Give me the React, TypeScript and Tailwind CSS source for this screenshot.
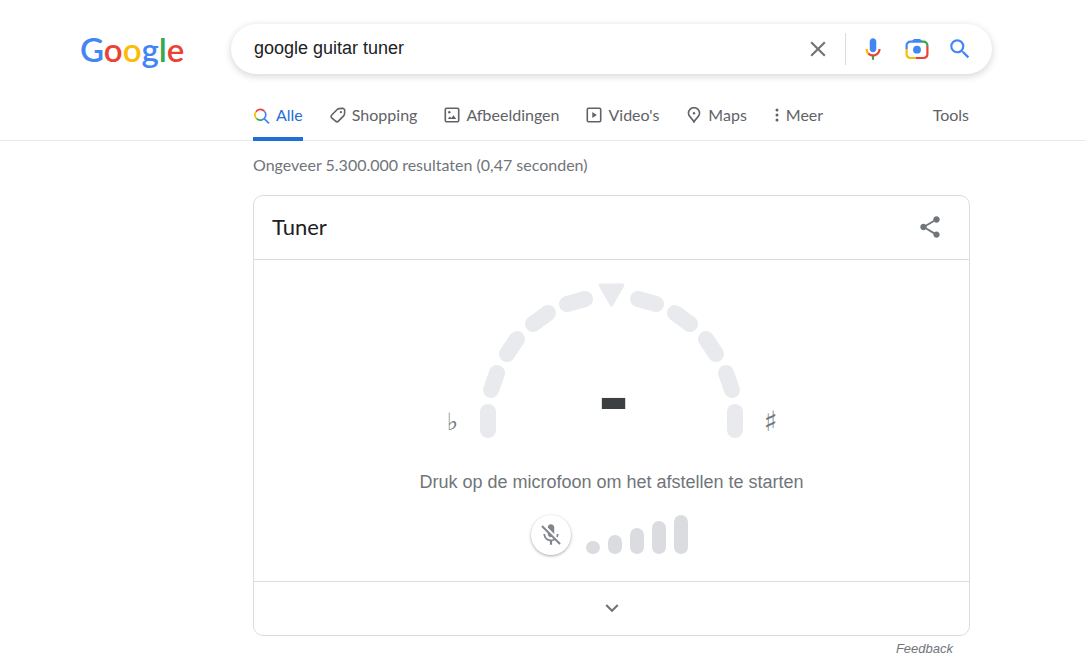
import { useState } from "react";

const segments = [
  [488, 412, 488, 430],
  [491, 390, 497, 373],
  [507, 354, 517, 339],
  [533, 324, 548, 313],
  [567, 304, 585, 299],
  [656, 304, 638, 299],
  [690, 324, 675, 313],
  [716, 354, 706, 339],
  [732, 390, 726, 373],
  [735, 412, 735, 430],
];

const tabs = [
  { label: "Alle", icon: AllIcon, active: true },
  { label: "Shopping", icon: TagIcon },
  { label: "Afbeeldingen", icon: ImageIcon },
  { label: "Video's", icon: VideoIcon },
  { label: "Maps", icon: PinIcon },
];

export default function App() {
  const [query, setQuery] = useState("google guitar tuner");

  return (
    <div className="min-h-screen bg-white font-['Liberation_Sans',Arial,sans-serif] text-[#202124]">
      <header className="flex items-center pt-6 pl-20">
        <a href="#" aria-label="Google" className="w-[151px] shrink-0 font-[Lato,sans-serif] text-[33px] leading-[50px] font-semibold">
          <span className="text-[#4285f4]">G</span>
          <span className="text-[#ea4335]">o</span>
          <span className="text-[#fbbc05]">o</span>
          <span className="text-[#4285f4]">g</span>
          <span className="text-[#34a853]">l</span>
          <span className="text-[#ea4335]">e</span>
        </a>
        <form
          onSubmit={(e) => e.preventDefault()}
          className="mr-6 flex h-[50px] w-full max-w-[761px] items-center rounded-full pr-[19px] pl-[23px] shadow-[0_2px_6px_1px_rgba(64,60,67,0.18)]"
        >
          <input
            aria-label="Zoeken"
            value={query}
            onChange={(e) => setQuery(e.target.value)}
            className="min-w-0 flex-1 pb-0.5 text-lg leading-6 outline-none"
          />
          <button type="button" aria-label="Wissen" onClick={() => setQuery("")} className="mr-[14px] text-[#70757a]">
            <svg className="size-[26px]" viewBox="0 0 24 24" fill="currentColor">
              <path d="M19 6.41L17.59 5 12 10.59 6.41 5 5 6.41 10.59 12 5 17.59 6.41 19 12 13.41 17.59 19 19 17.59 13.41 12z" />
            </svg>
          </button>
          <span className="h-8 w-px bg-[#dadce0]" />
          <button type="button" aria-label="Zoeken met je stem" className="ml-[14px]">
            <MicIcon />
          </button>
          <button type="button" aria-label="Zoeken met afbeelding" className="ml-[18px]">
            <LensIcon />
          </button>
          <button aria-label="Zoeken" className="ml-[17px] text-[#4285f4]">
            <svg className="size-[26px]" viewBox="0 0 24 24" fill="currentColor">
              <path d="M15.5 14h-.79l-.28-.27A6.471 6.471 0 0 0 16 9.5 6.5 6.5 0 1 0 9.5 16c1.61 0 3.09-.59 4.23-1.57l.27.28v.79l5 4.99L20.49 19l-4.99-5zm-6 0C7.01 14 5 11.99 5 9.5S7.01 5 9.5 5 14 7.01 14 9.5 11.99 14 9.5 14z" />
            </svg>
          </button>
        </form>
      </header>

      <nav className="border-b border-[#e8eaed] pl-[253px] font-[Lato,sans-serif] text-base text-[#5f6368]">
        <div className="flex h-[66px] max-w-[716px] items-stretch gap-[27px]">
          {tabs.map(({ label, icon: Icon, active }) => (
            <a
              key={label}
              href="#"
              className={
                active
                  ? "-mb-px flex items-center gap-[6px] border-b-4 border-[#1f6fd6] pt-[21px] pb-0.5 text-[#1f6fd6]"
                  : "flex items-center gap-[6px] pt-[21px] pb-[5px]"
              }
            >
              <Icon />
              {label}
            </a>
          ))}
          <button className="flex items-center gap-1 pt-[21px] pb-[5px]">
            <svg className="h-4 w-2" viewBox="0 0 8 16" fill="currentColor">
              <circle cx="3" cy="3" r="1.5" />
              <circle cx="3" cy="8" r="1.5" />
              <circle cx="3" cy="13" r="1.5" />
            </svg>
            Meer
          </button>
          <button className="ml-auto pt-[21px] pb-[5px]">Tools</button>
        </div>
      </nav>

      <main className="mr-6 ml-[253px] max-w-[717px]">
        <p className="pt-3 pb-[18px] font-[Lato,sans-serif] text-base leading-6 text-[#70757a]">
          Ongeveer 5.300.000 resultaten (0,47 seconden)
        </p>
        <section className="rounded-[10px] border border-[#dadce0]">
          <div className="flex h-16 items-center justify-between border-b border-[#dadce0] pr-[26px] pb-0.5 pl-[18px]">
            <h2 className="font-[Lato,sans-serif] text-[22px] leading-7">Tuner</h2>
            <button aria-label="Delen" className="text-[#70757a]">
              <svg className="size-[26px]" viewBox="0 0 24 24" fill="currentColor">
                <path d="M18 16.08c-.76 0-1.44.3-1.96.77L8.91 12.7c.05-.23.09-.46.09-.7s-.04-.47-.09-.7l7.05-4.11c.54.5 1.25.81 2.04.81 1.66 0 3-1.34 3-3s-1.34-3-3-3-3 1.34-3 3c0 .24.04.47.09.7L8.04 9.81C7.5 9.31 6.79 9 6 9c-1.66 0-3 1.34-3 3s1.34 3 3 3c.79 0 1.5-.31 2.04-.81l7.12 4.16c-.05.21-.08.43-.08.65 0 1.61 1.31 2.92 2.92 2.92s2.92-1.31 2.92-2.92-1.31-2.92-2.92-2.92z" />
              </svg>
            </button>
          </div>

          <div className="flex flex-col items-center pt-5 pb-[26px]">
            <div className="relative flex items-end gap-4 font-['DejaVu_Sans',sans-serif] leading-9 text-[#70757a]">
              <span className="w-[18px] text-center text-2xl leading-9">♭</span>
              <svg className="h-40 w-[268px]" viewBox="478 280 268 160">
                {segments.map(([x1, y1, x2, y2]) => (
                  <line key={`${x1}-${y1}`} x1={x1} y1={y1} x2={x2} y2={y2} stroke="#e8eaed" strokeWidth="16" strokeLinecap="round" />
                ))}
                <path d="M600 285h23l-11.5 20z" fill="#e8eaed" stroke="#e8eaed" strokeWidth="3" strokeLinejoin="round" />
              </svg>
              <span className="w-[18px] text-center text-[28px] leading-9">♯</span>
              <span className="absolute inset-x-0 top-[72px] pl-1 text-center font-['Liberation_Sans',Arial,sans-serif] text-[92px] leading-[88px] font-bold text-[#3c4043]">
                -
              </span>
            </div>
            <p className="mt-7 text-lg leading-7 text-[#70757a]">Druk op de microfoon om het afstellen te starten</p>
            <div className="mt-[19px] flex items-end gap-[15px] pr-1">
              <button
                aria-label="Microfoon inschakelen"
                className="flex size-10 items-center justify-center rounded-full text-[#80868b] shadow-[0_1px_3px_rgba(60,64,67,0.45)]"
              >
                <svg className="size-[26px]" viewBox="0 0 24 24" fill="currentColor">
                  <path d="M19 11h-1.7c0 .74-.16 1.43-.43 2.05l1.23 1.23c.56-.98.9-2.09.9-3.28zm-4.02.17c0-.06.02-.11.02-.17V5c0-1.66-1.34-3-3-3S9 3.34 9 5v.18l5.98 5.99zM4.27 3L3 4.27l6.01 6.01V11c0 1.66 1.33 3 2.99 3 .22 0 .44-.03.65-.08l1.66 1.66c-.71.33-1.5.52-2.31.52-2.76 0-5.3-2.1-5.3-5.1H5c0 3.41 2.72 6.23 6 6.72V21h2v-3.28c.91-.13 1.77-.45 2.54-.9L19.73 21 21 19.73 4.27 3z" />
                </svg>
              </button>
              <div className="flex items-end gap-2 pb-px">
                <span className="h-[13px] w-[14px] rounded-full bg-[#dadce0]" />
                <span className="h-[19px] w-[14px] rounded-full bg-[#dadce0]" />
                <span className="h-[26px] w-[14px] rounded-full bg-[#dadce0]" />
                <span className="h-[33px] w-[14px] rounded-full bg-[#dadce0]" />
                <span className="h-[39px] w-[14px] rounded-full bg-[#dadce0]" />
              </div>
            </div>
          </div>

          <button aria-label="Meer weergeven" className="flex h-[54px] w-full items-center justify-center border-t border-[#dadce0] pb-0.5 text-[#70757a]">
            <svg className="size-[26px]" viewBox="0 0 24 24" fill="currentColor">
              <path d="M16.59 8.59L12 13.17 7.41 8.59 6 10l6 6 6-6z" />
            </svg>
          </button>
        </section>
        <div className="flex justify-end pt-1 pr-[17px]">
          <a href="#" className="text-[13px] leading-[18px] text-[#70757a] italic">
            Feedback
          </a>
        </div>
      </main>
    </div>
  );
}

function MicIcon() {
  return (
    <svg className="size-[26px]" viewBox="0 0 24 24">
      <path fill="#4285f4" d="m12 15c1.66 0 3-1.31 3-2.97v-7.02c0-1.66-1.34-3.01-3-3.01s-3 1.34-3 3.01v7.02c0 1.66 1.34 2.97 3 2.97z" />
      <path fill="#34a853" d="m11 18.08h2v3.92h-2z" />
      <path fill="#fbbc05" d="m7.05 16.87c-1.27-1.33-2.05-2.83-2.05-4.87h2c0 1.45 0.56 2.42 1.47 3.38v0.32l-1.15 1.18z" />
      <path fill="#ea4335" d="m12 16.93a4.97 5.25 0 0 1 -3.54 -1.55l-1.41 1.49c1.26 1.34 3.02 2.13 4.95 2.13 3.87 0 6.99-2.92 6.99-7h-1.99c0 2.92-2.24 4.93-5 4.93z" />
    </svg>
  );
}

function LensIcon() {
  return (
    <svg className="size-[26px]" viewBox="0 0 26 26" fill="none" strokeWidth="2.2">
      <path stroke="#4285f4" d="M2.6 13V9.4a3.8 3.8 0 0 1 3.8-3.8H17" />
      <path fill="#4285f4" d="M7.5 5.5l1.8-2a1.5 1.5 0 0 1 1-.4h5.4a1.5 1.5 0 0 1 1 .4l1.8 2z" />
      <path stroke="#34a853" d="M17 5.6h2.6a3.8 3.8 0 0 1 3.8 3.8V10" />
      <path stroke="#ea4335" d="M23.4 10v8.2a3.8 3.8 0 0 1-3.8 3.8H12" />
      <path stroke="#fbbc05" d="M2.6 13v5.2A3.8 3.8 0 0 0 6.4 22H12" />
      <circle cx="13" cy="13.7" r="3.9" fill="#4285f4" />
    </svg>
  );
}

function AllIcon() {
  return (
    <svg className="size-[17px]" viewBox="0 0 17 17" fill="none" strokeWidth="1.7">
      <path stroke="#ea4335" d="M3 4.7A5.3 5.3 0 0 1 11.4 4.3" />
      <path stroke="#fbbc05" d="M3 4.7A5.3 5.3 0 0 0 3.5 11.5" />
      <path stroke="#34a853" d="M3.5 11.5A5.3 5.3 0 0 0 9 12.9" />
      <path stroke="#4285f4" d="M11.4 4.3A5.3 5.3 0 0 1 9 12.9M10.9 11.4L16 16.4" />
    </svg>
  );
}

function TagIcon() {
  return (
    <svg className="size-4" viewBox="0 0 16 16" fill="none" stroke="currentColor" strokeWidth="1.6" strokeLinejoin="round">
      <path d="M9.2 1.6L12.6 1.4a2 2 0 0 1 2.1 2.1L14.5 7a3 3 0 0 1-.9 1.9L8.4 14.100a2 2 0 0 1-2.8 0L1.700 10.900a2 2 0 0 1 0-2.900L7.200 2.500a3 3 0 0 1 2-.9z" />
      <circle cx="10.9" cy="5.2" r="1.1" fill="currentColor" stroke="none" />
    </svg>
  );
}

function ImageIcon() {
  return (
    <svg className="size-4" viewBox="0 0 16 16" fill="none" stroke="currentColor" strokeWidth="1.6">
      <rect x="1.3" y="1.3" width="13.4" height="13.4" rx="1.2" />
      <path d="M3.8 12l2-2.5 1.5 1.5 2.2-2.7L12.3 12z" fill="currentColor" stroke="none" />
      <circle cx="5.3" cy="5.3" r="1.2" fill="currentColor" stroke="none" />
    </svg>
  );
}

function VideoIcon() {
  return (
    <svg className="size-4" viewBox="0 0 16 16" fill="none" stroke="currentColor" strokeWidth="1.6">
      <rect x="1.3" y="1.3" width="13.4" height="13.4" rx="1.2" />
      <path d="M6.3 4.9v6.2L10.8 8z" fill="currentColor" stroke="none" />
    </svg>
  );
}

function PinIcon() {
  return (
    <svg className="size-4" viewBox="0 0 16 16" fill="none" stroke="currentColor" strokeWidth="1.6" strokeLinejoin="round">
      <path d="M8 15.2C7.3 11.9 2.4 10.3 2.4 6.3a5.6 5.6 0 0 1 11.2 0c0 4-4.9 5.6-5.6 8.9z" />
      <circle cx="8" cy="6.2" r="1.2" fill="currentColor" stroke="none" />
    </svg>
  );
}
